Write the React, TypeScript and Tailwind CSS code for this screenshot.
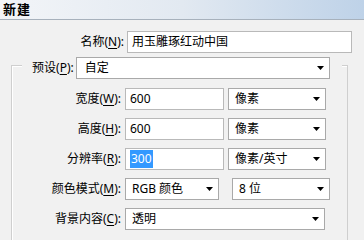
import React from "react";

const font = { fontFamily: '"Noto Sans", "Noto Sans CJK SC", sans-serif' };

function Arrow() {
  return (
    <svg width="7" height="4" viewBox="0 0 7 4" className="shrink-0">
      <path d="M0 0h7L3.5 4z" fill="#000" />
    </svg>
  );
}

function Label({ text, k }: { text: string; k: string }) {
  return (
    <span className="whitespace-nowrap">
      {text}(<span className="underline underline-offset-2">{k}</span>):
    </span>
  );
}

function Select({ value, w, pl = "pl-[6px]" }: { value: string; w: string; pl?: string }) {
  return (
    <div
      className={`${w} h-[22px] shrink-0 flex items-center justify-between ${pl} pr-[5px] bg-white border border-[#a9a9a9]`}
    >
      <span className="whitespace-nowrap">{value}</span>
      <Arrow />
    </div>
  );
}

function Input({ children, w }: { children: React.ReactNode; w: string }) {
  return (
    <div className={`${w} h-[22px] shrink-0 flex items-center pl-[4px] bg-white border border-[#b9b9b9]`}>
      {children}
    </div>
  );
}

function Row({ label, k, children }: { label: string; k: string; children: React.ReactNode }) {
  return (
    <div className="flex items-center h-[22px]">
      <div className="w-[110px] text-right pr-[1px]">
        <Label text={label} k={k} />
      </div>
      <div className="flex items-center gap-[4px] ml-[3px]">{children}</div>
    </div>
  );
}

export default function App() {
  return (
    <div className="w-[364px] h-[240px] overflow-hidden bg-[#f1f1f1] text-[12px] text-black leading-none" style={font}>
      {/* 标题栏 */}
      <div className="h-[20px] flex items-center pl-[3px] bg-gradient-to-r from-[#f3f5f8] via-[#e2e9f1] to-[#bed2e8] border-b border-[#a7b1bc]">
        <span className="font-bold text-[13px] tracking-[1px]">新建</span>
      </div>

      {/* 名称 */}
      <div className="flex items-center mt-[11px] h-[22px]">
        <div className="w-[124px] text-right">
          <Label text="名称" k="N" />
        </div>
        <div className="ml-[3px] w-[225px] h-[22px] flex items-center pl-[4px] bg-white border border-[#b9b9b9]">
          用玉雕琢红动中国
        </div>
      </div>

      {/* 分组框 */}
      <div className="mt-[12px] ml-[11px] w-[337px] h-[200px] border border-[#cfcfcf] shadow-[inset_1px_1px_0_#fff]">
        <div className="-mt-[9px] ml-[10px] w-[320px] pl-[10px] pr-[6px] flex items-center gap-[2px] bg-[#f1f1f1]">
          <Label text="预设" k="P" />
          <Select value="自定" w="w-[254px]" pl="pl-[8px]" />
        </div>

        <div className="mt-[9px] flex flex-col gap-[8px]">
          <Row label="宽度" k="W">
            <Input w="w-[99px]">600</Input>
            <Select value="像素" w="w-[98px]" />
          </Row>
          <Row label="高度" k="H">
            <Input w="w-[99px]">600</Input>
            <Select value="像素" w="w-[98px]" />
          </Row>
          <Row label="分辨率" k="R">
            <Input w="w-[99px]">
              <span className="bg-[#3399ff] text-white px-[1px] py-[3px]">300</span>
            </Input>
            <Select value="像素/英寸" w="w-[98px]" />
          </Row>
          <Row label="颜色模式" k="M">
            <Select value="RGB 颜色" w="w-[94px]" />
            <div className="w-[5px]" />
            <Select value="8 位" w="w-[98px]" />
          </Row>
          <Row label="背景内容" k="C">
            <Select value="透明" w="w-[200px]" />
          </Row>
        </div>
      </div>
    </div>
  );
}
